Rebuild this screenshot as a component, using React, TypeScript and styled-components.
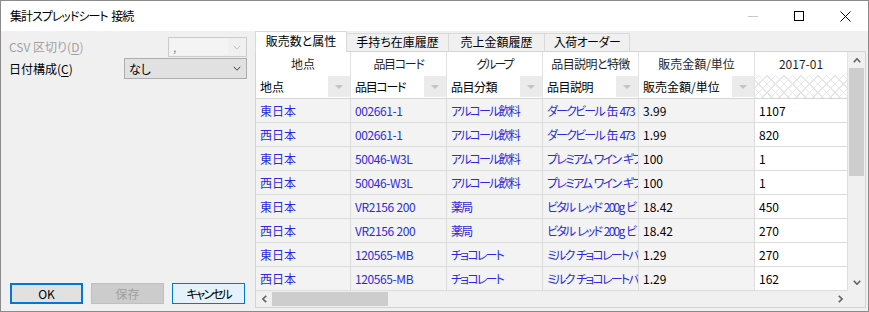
import React from 'react';
import styled, { createGlobalStyle } from 'styled-components';

const GlobalStyle = createGlobalStyle`
  html, body { margin: 0; padding: 0; background: #fff; }
  body {
    font-family: "Noto Sans CJK JP", "Noto Sans", sans-serif;
    font-size: 12px;
    font-feature-settings: "palt";
  }
  * { box-sizing: border-box; }
`;

const Win = styled.div`
  width: 869px;
  height: 312px;
  border: 1px solid #8a8a8a;
  display: flex;
  flex-direction: column;
  background: #f0f0f0;
  overflow: hidden;
`;

const TitleBar = styled.div`
  height: 30px;
  flex-shrink: 0;
  background: #fff;
  display: flex;
  align-items: center;
`;

const Title = styled.div`
  flex: 1;
  padding-left: 9px;
  color: #000;
  font-size: 12px;
  line-height: 16px;
  letter-spacing: -1px;
  word-spacing: 2px;
`;

const Ctrl = styled.div`
  width: 46px;
  height: 30px;
  display: flex;
  align-items: center;
  justify-content: center;
`;

const Body = styled.div`
  flex: 1;
  display: flex;
  min-height: 0;
`;

const LeftPane = styled.div`
  width: 253px;
  flex-shrink: 0;
  display: flex;
  flex-direction: column;
  padding: 6px 7px 7px 8px;
`;

const FieldRow = styled.div<{ $h: number; $mb?: number }>`
  height: ${(p) => p.$h}px;
  margin-bottom: ${(p) => p.$mb ?? 0}px;
  display: flex;
  align-items: center;
  justify-content: space-between;
`;

const Label = styled.span<{ $disabled?: boolean }>`
  color: ${(p) => (p.$disabled ? '#a0a0a0' : '#000')};
  font-size: 12px;
  line-height: 16px;
  u { text-underline-offset: 2px; }
`;

const Combo = styled.div<{ $w: number; $disabled?: boolean }>`
  width: ${(p) => p.$w}px;
  height: 100%;
  border: 1px solid ${(p) => (p.$disabled ? '#cccccc' : '#adadad')};
  background: ${(p) => (p.$disabled ? '#f0f0f0' : '#e1e1e1')};
  display: flex;
  align-items: center;
  padding: 1px;
`;

const ComboValue = styled.div<{ $disabled?: boolean }>`
  flex: 1;
  height: 100%;
  padding-left: 3px;
  display: flex;
  align-items: center;
  color: ${(p) => (p.$disabled ? '#8a8a8a' : '#000')};
  background: ${(p) => (p.$disabled ? '#f4f4f4' : 'transparent')};
  line-height: 16px;
`;

const ComboArrow = styled.div`
  width: 17px;
  height: 100%;
  display: flex;
  align-items: center;
  justify-content: center;
`;

const ButtonRow = styled.div`
  margin-top: auto;
  display: flex;
  gap: 8px;
  padding-left: 1px;
`;

type BtnKind = 'default' | 'disabled' | 'focus';

const Button = styled.div<{ $kind: BtnKind; $ls?: number }>`
  width: 73px;
  height: 21px;
  display: flex;
  align-items: center;
  justify-content: center;
  font-size: 12px;
  line-height: 16px;
  letter-spacing: ${(p) => p.$ls ?? 0}px;
  background: ${(p) => (p.$kind === 'disabled' ? '#cccccc' : p.$kind === 'focus' ? '#e5f1fb' : '#e1e1e1')};
  color: ${(p) => (p.$kind === 'disabled' ? '#a0a0a0' : '#000')};
  border: ${(p) =>
    p.$kind === 'default' ? '2px solid #0078d7' : p.$kind === 'focus' ? '1px solid #0078d7' : '1px solid #bfbfbf'};
`;

const RightPane = styled.div`
  flex: 1;
  display: flex;
  flex-direction: column;
  padding: 0 2px 3px 1px;
  min-width: 0;
`;

const TabStrip = styled.div`
  height: 20px;
  flex-shrink: 0;
  display: flex;
  align-items: flex-start;
`;

const Tab = styled.div<{ $w: number; $active?: boolean; $ls?: number }>`
  width: ${(p) => p.$w}px;
  height: ${(p) => (p.$active ? 21 : 18)}px;
  margin-top: ${(p) => (p.$active ? 0 : 2)}px;
  margin-left: -1px;
  &:first-child { margin-left: 0; }
  border: 1px solid #d9d9d9;
  border-bottom: none;
  background: ${(p) => (p.$active ? '#fff' : '#f0f0f0')};
  position: relative;
  z-index: ${(p) => (p.$active ? 2 : 1)};
  display: flex;
  justify-content: center;
  padding-top: ${(p) => (p.$active ? 1 : 0)}px;
  line-height: 16px;
  font-size: 12px;
  letter-spacing: ${(p) => p.$ls ?? 0}px;
  color: #000;
  white-space: nowrap;
`;

const Panel = styled.div`
  border: 1px solid #d4d4d4;
  background: #fff;
  display: grid;
  grid-template-columns: 592px 17px;
  grid-template-rows: 239px 16px;
  width: 611px;
`;

const Table = styled.div`
  display: grid;
  grid-template-columns: 95px 96px 96px 96px 116px 93px;
  grid-auto-rows: min-content;
  overflow: hidden;
`;

const HeadCell = styled.div<{ $ls?: number }>`
  height: 23px;
  border-right: 1px solid #e3e3e3;
  text-align: center;
  line-height: 23px;
  letter-spacing: ${(p) => p.$ls ?? 0}px;
  color: #1f1f1f;
  white-space: nowrap;
  overflow: hidden;
`;

const FilterCell = styled.div<{ $hatch?: boolean }>`
  height: 24px;
  border-right: 1px solid #e3e3e3;
  border-bottom: 1px solid #d6d6d6;
  display: flex;
  align-items: stretch;
  padding-left: ${(p) => (p.$hatch ? 0 : 4)}px;
  background-color: #fff;
  background-image: ${(p) =>
    p.$hatch
      ? 'repeating-linear-gradient(45deg, #e6e6e6 0 1px, transparent 1px 6px), repeating-linear-gradient(-45deg, #e6e6e6 0 1px, transparent 1px 6px)'
      : 'none'};
`;

const FilterText = styled.span<{ $ls?: number }>`
  flex: 1;
  line-height: 23px;
  letter-spacing: ${(p) => p.$ls ?? 0}px;
  color: #000;
  white-space: nowrap;
  overflow: hidden;
`;

const FilterBtn = styled.div`
  width: 22px;
  margin: 1px 0 1px 0;
  background: #ebebeb;
  display: flex;
  align-items: center;
  justify-content: center;
`;

const DataCell = styled.div<{ $blue?: boolean; $white?: boolean; $ls?: number }>`
  height: 24px;
  border-right: 1px solid #dcdcdc;
  border-bottom: 1px solid #dcdcdc;
  background: ${(p) => (p.$white ? '#fff' : '#f3f3f3')};
  color: ${(p) => (p.$blue ? '#2a2ae0' : '#000')};
  padding-left: 4px;
  line-height: 23px;
  letter-spacing: ${(p) => p.$ls ?? 0}px;
  word-spacing: ${(p) => -(p.$ls ?? 0)}px;
  white-space: nowrap;
  overflow: hidden;
`;

const VScroll = styled.div`
  background: #f0f0f0;
  display: flex;
  flex-direction: column;
`;

const ArrowBox = styled.div<{ $w?: number; $h?: number }>`
  width: ${(p) => (p.$w ? `${p.$w}px` : 'auto')};
  height: ${(p) => (p.$h ? `${p.$h}px` : 'auto')};
  flex-shrink: 0;
  display: flex;
  align-items: center;
  justify-content: center;
`;

const VThumb = styled.div`
  height: 108px;
  margin: 0 1px;
  background: #cdcdcd;
  flex-shrink: 0;
`;

const Track = styled.div`
  flex: 1;
`;

const HScroll = styled.div`
  background: #f0f0f0;
  display: flex;
  padding: 1px 0;
`;

const HThumb = styled.div`
  width: 116px;
  background: #cdcdcd;
  flex-shrink: 0;
`;

const Corner = styled.div`
  background: #f0f0f0;
`;

const Chevron = ({ dir, color = '#606060', w = 8, h = 5, sw = 1.6 }: { dir: 'up' | 'down' | 'left' | 'right'; color?: string; w?: number; h?: number; sw?: number }) => {
  if (dir === 'up' || dir === 'down') {
    const pts = dir === 'up' ? `0.8,${h - 0.8} ${w / 2},0.8 ${w - 0.8},${h - 0.8}` : `0.8,0.8 ${w / 2},${h - 0.8} ${w - 0.8},0.8`;
    return (
      <svg width={w} height={h} viewBox={`0 0 ${w} ${h}`}>
        <polyline points={pts} fill="none" stroke={color} strokeWidth={sw} />
      </svg>
    );
  }
  const pts = dir === 'left' ? `${h - 0.8},0.8 0.8,${w / 2} ${h - 0.8},${w - 0.8}` : `0.8,0.8 ${h - 0.8},${w / 2} 0.8,${w - 0.8}`;
  return (
    <svg width={h} height={w} viewBox={`0 0 ${h} ${w}`}>
      <polyline points={pts} fill="none" stroke={color} strokeWidth={sw} />
    </svg>
  );
};

const Tri = () => (
  <svg width="8" height="4" viewBox="0 0 8 4">
    <polygon points="0,0 8,0 4,4" fill="#c4c4c4" />
  </svg>
);

const heads = [
  { t: '地点', ls: 0 },
  { t: '品目コード', ls: -1.3 },
  { t: 'グループ', ls: -2 },
  { t: '品目説明と特徴', ls: -0.6 },
  { t: '販売金額/単位', ls: 0 },
  { t: '2017-01', ls: 0 },
];
const filters = [
  { t: '地点', ls: 0 },
  { t: '品目コード', ls: -1.3 },
  { t: '品目分類', ls: -0.5 },
  { t: '品目説明', ls: -0.5 },
  { t: '販売金額/単位', ls: 0 },
];

const colLs = [0, -0.4, -1.8, -1.8, 0, 0];

const rows: string[][] = [
  ['東日本', '002661-1', 'アルコール飲料', 'ダークビール 缶 473', '3.99', '1107'],
  ['西日本', '002661-1', 'アルコール飲料', 'ダークビール 缶 473', '1.99', '820'],
  ['東日本', '50046-W3L', 'アルコール飲料', 'プレミアム ワイン ギフ', '100', '1'],
  ['西日本', '50046-W3L', 'アルコール飲料', 'プレミアム ワイン ギフ', '100', '1'],
  ['東日本', 'VR2156 200', '薬局', 'ビタル レッド 200g ビ', '18.42', '450'],
  ['西日本', 'VR2156 200', '薬局', 'ビタル レッド 200g ビ', '18.42', '270'],
  ['東日本', '120565-MB', 'チョコレート', 'ミルク チョコレートバー', '1.29', '270'],
  ['西日本', '120565-MB', 'チョコレート', 'ミルク チョコレートバー', '1.29', '162'],
];

const tabs = [
  { label: '販売数と属性', w: 92, active: true, ls: 0 },
  { label: '手持ち在庫履歴', w: 103, ls: 0 },
  { label: '売上金額履歴', w: 97, ls: 0 },
  { label: '入荷オーダー', w: 86, ls: -0.5 },
];

export default function App() {
  return (
    <>
      <GlobalStyle />
      <Win>
        <TitleBar>
          <Title>集計スプレッドシート 接続</Title>
          <Ctrl>
            <svg width="10" height="1" viewBox="0 0 10 1">
              <rect x="0" y="0" width="10" height="1" fill="#c8c8c8" />
            </svg>
          </Ctrl>
          <Ctrl>
            <svg width="10" height="10" viewBox="0 0 10 10">
              <rect x="0.5" y="0.5" width="9" height="9" fill="none" stroke="#000" strokeWidth="1" />
            </svg>
          </Ctrl>
          <Ctrl>
            <svg width="11" height="11" viewBox="0 0 11 11">
              <path d="M0.5 0.5 L10.5 10.5 M10.5 0.5 L0.5 10.5" stroke="#000" strokeWidth="1" />
            </svg>
          </Ctrl>
        </TitleBar>
        <Body>
          <LeftPane>
            <FieldRow $h={20} $mb={1}>
              <Label $disabled>
                CSV 区切り(<u>D</u>)
              </Label>
              <Combo $w={79} $disabled>
                <ComboValue $disabled>,</ComboValue>
                <ComboArrow>
                  <Chevron dir="down" color="#c4c4c4" w={8} h={5} sw={1} />
                </ComboArrow>
              </Combo>
            </FieldRow>
            <FieldRow $h={21}>
              <Label>
                日付構成(<u>C</u>)
              </Label>
              <Combo $w={123}>
                <ComboValue>なし</ComboValue>
                <ComboArrow>
                  <Chevron dir="down" color="#444" w={8} h={5} sw={1} />
                </ComboArrow>
              </Combo>
            </FieldRow>
            <ButtonRow>
              <Button $kind="default">OK</Button>
              <Button $kind="disabled">保存</Button>
              <Button $kind="focus" $ls={-2}>
                キャンセル
              </Button>
            </ButtonRow>
          </LeftPane>
          <RightPane>
            <TabStrip>
              {tabs.map((t) => (
                <Tab key={t.label} $w={t.w} $active={t.active} $ls={t.ls}>
                  {t.label}
                </Tab>
              ))}
            </TabStrip>
            <Panel>
              <Table>
                {heads.map((h) => (
                  <HeadCell key={h.t} $ls={h.ls}>
                    {h.t}
                  </HeadCell>
                ))}
                {filters.map((f) => (
                  <FilterCell key={f.t}>
                    <FilterText $ls={f.ls}>{f.t}</FilterText>
                    <FilterBtn>
                      <Tri />
                    </FilterBtn>
                  </FilterCell>
                ))}
                <FilterCell $hatch />
                {rows.map((r, i) =>
                  r.map((c, j) => (
                    <DataCell key={`${i}-${j}`} $blue={j < 4} $white={j === 5} $ls={colLs[j]}>
                      {c}
                    </DataCell>
                  ))
                )}
              </Table>
              <VScroll>
                <ArrowBox $h={16}>
                  <Chevron dir="up" />
                </ArrowBox>
                <VThumb />
                <Track />
                <ArrowBox $h={17}>
                  <Chevron dir="down" />
                </ArrowBox>
              </VScroll>
              <HScroll>
                <ArrowBox $w={16}>
                  <Chevron dir="left" />
                </ArrowBox>
                <HThumb />
                <Track />
                <ArrowBox $w={16}>
                  <Chevron dir="right" />
                </ArrowBox>
              </HScroll>
              <Corner />
            </Panel>
          </RightPane>
        </Body>
      </Win>
    </>
  );
}
